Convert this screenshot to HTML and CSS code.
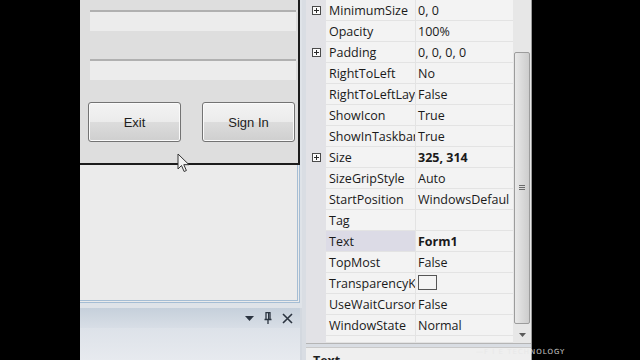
FILE: index.html
```html
<!DOCTYPE html>
<html lang="en">

<head>
    <meta charset="UTF-8">
    <meta name="viewport" content="width=device-width, initial-scale=1.0">
    <title>Form1 designer</title>
    <link rel="stylesheet" href="styles.css">
</head>

<body>
    <div class="screen">
        <div class="void left"></div>

        <div class="designer">
            <div class="form">
                <div class="textbox"></div>
                <div class="textbox"></div>
                <div class="buttons">
                    <div class="btn">Exit</div>
                    <div class="btn">Sign In</div>
                </div>
            </div>
            <div class="canvas"></div>
            <div class="dock">
                <div class="dock-head">
                    <svg width="9" height="5" viewBox="0 0 9 5"><path d="M0 0h9L4.5 5z" fill="#2b3440"/></svg>
                    <svg width="8" height="12" viewBox="0 0 8 12"><path d="M2 0.5h4v7H2zM0.5 7.5h7M4 7.5v4.5" fill="none" stroke="#2b3440" stroke-width="1.3"/><path d="M4.6 1v6" stroke="#2b3440" stroke-width="1.2"/></svg>
                    <svg width="11" height="11" viewBox="0 0 11 11"><path d="M1 1l9 9M10 1l-9 9" stroke="#2b3440" stroke-width="1.6"/></svg>
                </div>
                <div class="dock-body"></div>
            </div>
        </div>

        <div class="props">
            <div class="grid-wrap">
                <div class="grid">
                    <div class="row"><span class="margin"><i class="plus"></i></span><span class="name">MinimumSize</span><span class="value">0, 0</span></div>
                    <div class="row"><span class="margin"></span><span class="name">Opacity</span><span class="value">100%</span></div>
                    <div class="row"><span class="margin"><i class="plus"></i></span><span class="name">Padding</span><span class="value">0, 0, 0, 0</span></div>
                    <div class="row"><span class="margin"></span><span class="name">RightToLeft</span><span class="value">No</span></div>
                    <div class="row"><span class="margin"></span><span class="name">RightToLeftLay</span><span class="value">False</span></div>
                    <div class="row"><span class="margin"></span><span class="name">ShowIcon</span><span class="value">True</span></div>
                    <div class="row"><span class="margin"></span><span class="name">ShowInTaskbar</span><span class="value">True</span></div>
                    <div class="row"><span class="margin"><i class="plus"></i></span><span class="name">Size</span><span class="value bold">325, 314</span></div>
                    <div class="row"><span class="margin"></span><span class="name">SizeGripStyle</span><span class="value">Auto</span></div>
                    <div class="row"><span class="margin"></span><span class="name">StartPosition</span><span class="value">WindowsDefaul</span></div>
                    <div class="row"><span class="margin"></span><span class="name">Tag</span><span class="value"></span></div>
                    <div class="row selected"><span class="margin"></span><span class="name">Text</span><span class="value bold">Form1</span></div>
                    <div class="row"><span class="margin"></span><span class="name">TopMost</span><span class="value">False</span></div>
                    <div class="row"><span class="margin"></span><span class="name">TransparencyK</span><span class="value"><i class="swatch"></i></span></div>
                    <div class="row"><span class="margin"></span><span class="name">UseWaitCursor</span><span class="value">False</span></div>
                    <div class="row"><span class="margin"></span><span class="name">WindowState</span><span class="value">Normal</span></div>
                    <div class="row blank"><span class="margin"></span><span class="name"></span><span class="value"></span></div>
                </div>
                <div class="scrollbar">
                    <div class="thumb">
                        <svg width="6" height="6" viewBox="0 0 6 6"><path d="M0 0.5h6M0 2.5h6M0 4.5h6" stroke="#6b6b6b" stroke-width="1"/></svg>
                    </div>
                    <svg class="arrow" width="7" height="4" viewBox="0 0 7 4"><path d="M0 0h7L3.5 4z" fill="#5a5a5a"/></svg>
                </div>
            </div>
            <div class="desc">Text</div>
        </div>

        <div class="void"></div>
    </div>

    <svg class="pointer" width="14" height="20" viewBox="0 0 14 20"><path d="M1 1v15l3.5-3.5 2.6 6 2.3-1-2.6-5.8H12z" fill="#f2f2f2" stroke="#333" stroke-width="1"/></svg>
    <div class="watermark">—F I E TECHNOLOGY</div>
</body>

</html>
```

FILE: styles.css
```css
body {
    margin: 0;
    background: #000;
    font-family: "Open Sans", "Noto Sans", sans-serif;
    overflow: hidden;
}

.screen {
    display: flex;
    width: 640px;
    height: 360px;
}

.void {
    flex: 1;
    background: #000;
}

.void.left {
    flex: 0 0 80px;
}

/* form designer */

.designer {
    flex: 0 0 222px;
    display: flex;
    flex-direction: column;
    background: #dfe3e8;
}

.form {
    height: 163px;
    width: 208px;
    padding-left: 10px;
    background: #dedede;
    border-right: 2px solid #1c1c1c;
    border-bottom: 2px solid #1c1c1c;
}

.textbox {
    width: 206px;
    height: 19px;
    margin-top: 10px;
    background: #ececec;
    border-top: 2px solid #b0b0b0;
}

.textbox + .textbox {
    margin-top: 28px;
}

.buttons {
    display: flex;
    justify-content: space-between;
    margin-top: 22px;
    margin-left: -2px;
    width: 207px;
}

.btn {
    width: 91px;
    height: 38px;
    border: 1px solid #737373;
    border-radius: 3px;
    background: linear-gradient(#f3f3f3, #ebebeb 50%, #dcdcdc 51%, #cfcfcf);
    box-shadow: inset 0 0 0 1px #fafafa;
    font-family: "Liberation Sans", Arial, sans-serif;
    font-size: 13px;
    color: #1e1e1e;
    text-align: center;
    line-height: 40px;
}

.canvas {
    height: 135px;
    width: 217px;
    background: #ebebeb;
    border-right: 3px double #a5bdd4;
    border-bottom: 3px double #a5bdd4;
}

.dock {
    flex: 1;
    margin-top: 5px;
    display: flex;
    flex-direction: column;
    border-right: 2px solid #d3d8df;
}

.dock-head {
    height: 20px;
    display: flex;
    align-items: center;
    justify-content: flex-end;
    gap: 10px;
    padding-right: 7px;
    background: linear-gradient(#c6d0db, #d8dee6);
}

.dock-body {
    flex: 1;
    background: linear-gradient(#dde2e9, #e7eaef);
}

/* property grid */

.props {
    flex: 0 0 230px;
    min-width: 0;
    display: flex;
    flex-direction: column;
    background: #d9dde3;
    padding-left: 4px;
    box-sizing: border-box;
    border-right: 1px solid #9a9a9a;
}

.grid-wrap {
    display: flex;
    height: 343px;
    border-bottom: 1px solid #b5b5b5;
}

.grid {
    flex: 1;
    min-width: 0;
    background: #f3f3f3;
}

.row {
    display: flex;
    height: 21px;
    font-size: 12.5px;
    color: #1a1a1a;
    line-height: 20px;
}

.row.blank {
    height: 7px;
}

.margin {
    flex: 0 0 20px;
    background: #e2e2e6;
    display: flex;
    align-items: center;
    justify-content: center;
}

.name,
.value {
    box-sizing: border-box;
    padding-top: 1px;
    border-bottom: 1px solid #e3e3e3;
    white-space: nowrap;
    overflow: hidden;
    min-width: 0;
}

.name {
    flex: 0 0 90px;
    padding-left: 3px;
    border-right: 1px solid #e3e3e3;
}

.value {
    flex: 1;
    padding-left: 2px;
}

.selected .name {
    background: #dcdbe6;
}

.bold {
    font-weight: 700;
}

.plus {
    width: 9px;
    height: 9px;
    border: 1px solid #4a4a4a;
    box-sizing: border-box;
    background:
        linear-gradient(#2a2a2a, #2a2a2a) center / 5px 1px no-repeat,
        linear-gradient(#2a2a2a, #2a2a2a) center / 1px 5px no-repeat,
        #fafafa;
}

.swatch {
    display: inline-block;
    width: 19px;
    height: 15px;
    margin-top: 1px;
    box-sizing: border-box;
    border: 1px solid #555;
    background: #f4f4f4;
    vertical-align: top;
}

.scrollbar {
    flex: 0 0 18px;
    background: #e7e7e7;
    display: flex;
    flex-direction: column;
    align-items: center;
}

.thumb {
    width: 14px;
    height: 270px;
    margin-top: 52px;
    border: 1px solid #9c9c9c;
    border-radius: 2px;
    background: linear-gradient(90deg, #e9e9e9, #dadada 50%, #cdcdcd);
    display: flex;
    align-items: center;
    justify-content: center;
}

.arrow {
    margin-top: 9px;
}

.desc {
    flex: 1;
    margin-top: 3px;
    border-top: 1px solid #c9c9c9;
    background: #efefef;
    padding-left: 7px;
    font-size: 12.5px;
    font-weight: 700;
    color: #1f1f1f;
    line-height: 26px;
}

/* overlays */

.pointer {
    position: absolute;
    left: 177px;
    top: 153px;
}

.watermark {
    position: absolute;
    left: 476px;
    top: 348px;
    font-family: "DejaVu Sans", sans-serif;
    font-size: 7px;
    letter-spacing: 1px;
    color: #e8e8e8;
    opacity: 0.85;
}
```
